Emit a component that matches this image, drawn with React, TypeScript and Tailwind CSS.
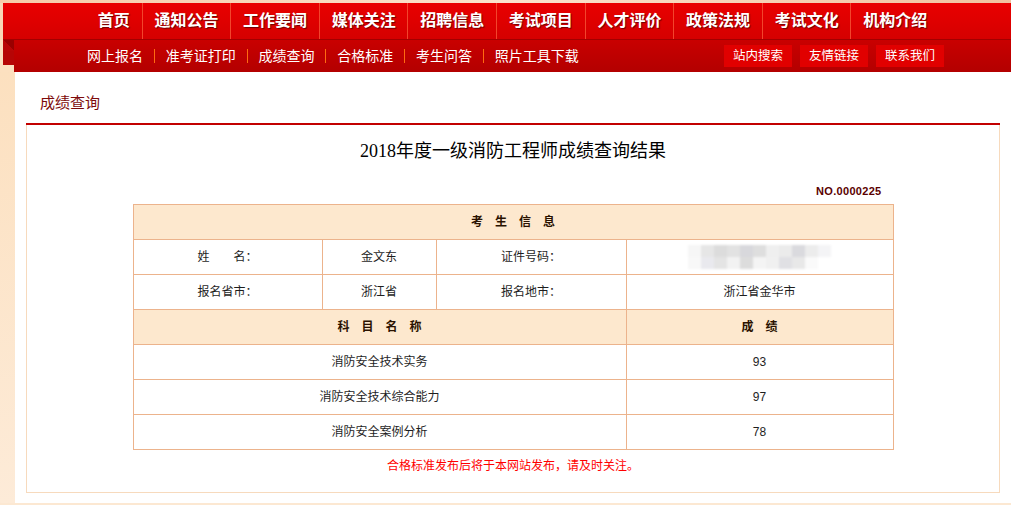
import React from 'react';

const topNav = ['首页', '通知公告', '工作要闻', '媒体关注', '招聘信息', '考试项目', '人才评价', '政策法规', '考试文化', '机构介绍'];
const subNav = ['网上报名', '准考证打印', '成绩查询', '合格标准', '考生问答', '照片工具下载'];
const btns = ['站内搜索', '友情链接', '联系我们'];

const blurRow1 = ['#f6f6f6', '#e6e6e6', '#dcdcdc', '#e2e2e2', '#d8d8dc', '#dedede', '#efefef', '#ebebeb', '#dadade', '#ececec', '#f4f4f6'];
const blurRow2 = ['#f8f8f8', '#e9e9ee', '#e4e4e4', '#f2f2f2', '#dcdcdc', '#f4f4f4', '#f0f0f0', '#e0e0e4', '#e8e8e8', '#fafafa', '#ffffff'];

const cell = 'flex items-center justify-center border-r border-b border-[#ecb38c] h-[35px] text-[12px] leading-[16px] text-[#1e1e1e]';
const head = 'flex items-center justify-center border-r border-b border-[#ecb38c] h-[35px] text-[12px] leading-[16px] text-[#2a1200] font-bold bg-[#fde8ce]';

export default function App() {
  return (
    <div className="w-[1011px] h-[505px] overflow-hidden bg-[#fce4c6] font-['Liberation_Sans','Noto_Sans_CJK_SC',sans-serif]">
      {/* top strip */}
      <div className="h-[3px] bg-gradient-to-r from-[#f6cba8] via-[#fbe3cc] to-[#f1c29f]" />
      {/* main nav */}
      <div className="flex h-[37px]">
        <div className="w-[3px] bg-[#f9d6b6]" />
        <div className="flex-1 flex items-stretch pl-[83px] bg-gradient-to-b from-[#e90000] to-[#d50000] border-b border-[#a30000]">
          {topNav.map((t, i) => (
            <div
              key={t}
              className={`flex items-center px-[11.8px] text-[16px] leading-[20px] font-bold text-white [text-shadow:1px_1px_1px_rgba(90,0,0,0.85)] ${i > 0 ? 'border-l border-[#f2452c]' : ''}`}
            >
              {t}
            </div>
          ))}
        </div>
      </div>
      {/* sub nav */}
      <div className="flex h-[32px]">
        <div className="w-[3px] bg-[#fce0c0]" />
        <div className="w-[11px] flex flex-col">
          <div className="h-[11px] bg-[linear-gradient(to_bottom_left,#9a0000_50%,#b80606_50%)]" />
          <div className="h-[14px] bg-[#b60505]" />
          <div className="flex-1 bg-[#fce0c0]" />
        </div>
        <div className="flex-1 flex items-center justify-between pl-[62px] pr-[67px] bg-gradient-to-b from-[#c90000] to-[#b30000]">
          <div className="flex items-center">
            {subNav.map((t, i) => (
              <div key={t} className="flex items-center">
                {i > 0 && <div className="w-px h-[14px] bg-[#ff6a10]" />}
                <div className="px-[10.9px] text-[14px] leading-[18px] text-white">{t}</div>
              </div>
            ))}
          </div>
          <div className="flex items-center gap-2">
            {btns.map((b) => (
              <div key={b} className="w-[68px] h-[22px] flex items-center justify-center bg-[#e10000] text-white text-[12.5px] leading-[16px]">
                {b}
              </div>
            ))}
          </div>
        </div>
      </div>
      {/* body */}
      <div className="flex h-[431px]">
        <div className="w-[15px] bg-gradient-to-b from-[#fce0bf] to-[#fdebd8]" />
        <div className="flex-1 bg-white px-[11px]">
          <div className="pt-[21px] pb-[10px] pl-[14px] text-[15px] leading-[20px] text-[#7d0a0a]">成绩查询</div>
          <div className="h-[2px] bg-[#c20000]" />
          <div className="border-x border-b border-[#f7dabd] pt-[14px] pb-[18px]">
            <div className="text-center text-[18px] leading-[24px] text-[#000] font-['Liberation_Serif','Noto_Sans_CJK_SC',serif]">
              2018年度一级消防工程师成绩查询结果
            </div>
            <div className="mx-auto w-[761px] mt-[21px] text-right pr-[12px] text-[11px] leading-[14px] font-bold text-[#5a0000] tracking-[0.3px]">
              NO.0000225
            </div>
            <div className="mx-auto w-[761px] mt-[6px] border-l border-t border-[#ecb38c]">
              <div className={head}>考　生　信　息</div>
              <div className="grid grid-cols-[189px_114px_190px_267px]">
                <div className={cell}>姓　　名：</div>
                <div className={cell}>金文东</div>
                <div className={cell}>证件号码：</div>
                <div className={cell}>
                  <div className="flex flex-col blur-[1.2px]">
                    <div className="flex">
                      {blurRow1.map((c, i) => (
                        <div key={i} className="w-[13px] h-[12px]" style={{ backgroundColor: c }} />
                      ))}
                    </div>
                    <div className="flex">
                      {blurRow2.map((c, i) => (
                        <div key={i} className="w-[13px] h-[12px]" style={{ backgroundColor: c }} />
                      ))}
                    </div>
                  </div>
                </div>
                <div className={cell}>报名省市：</div>
                <div className={cell}>浙江省</div>
                <div className={cell}>报名地市：</div>
                <div className={cell}>浙江省金华市</div>
              </div>
              <div className="grid grid-cols-[493px_267px]">
                <div className={head}>科　目　名　称</div>
                <div className={head}>成　绩</div>
                <div className={cell}>消防安全技术实务</div>
                <div className={cell}>93</div>
                <div className={cell}>消防安全技术综合能力</div>
                <div className={cell}>97</div>
                <div className={cell}>消防安全案例分析</div>
                <div className={cell}>78</div>
              </div>
            </div>
            <div className="mt-[8px] text-center text-[12px] leading-[16px] text-[#ff0000]">
              合格标准发布后将于本网站发布，请及时关注。
            </div>
          </div>
        </div>
      </div>
      <div className="h-[2px] bg-[#fce8d2]" />
    </div>
  );
}
